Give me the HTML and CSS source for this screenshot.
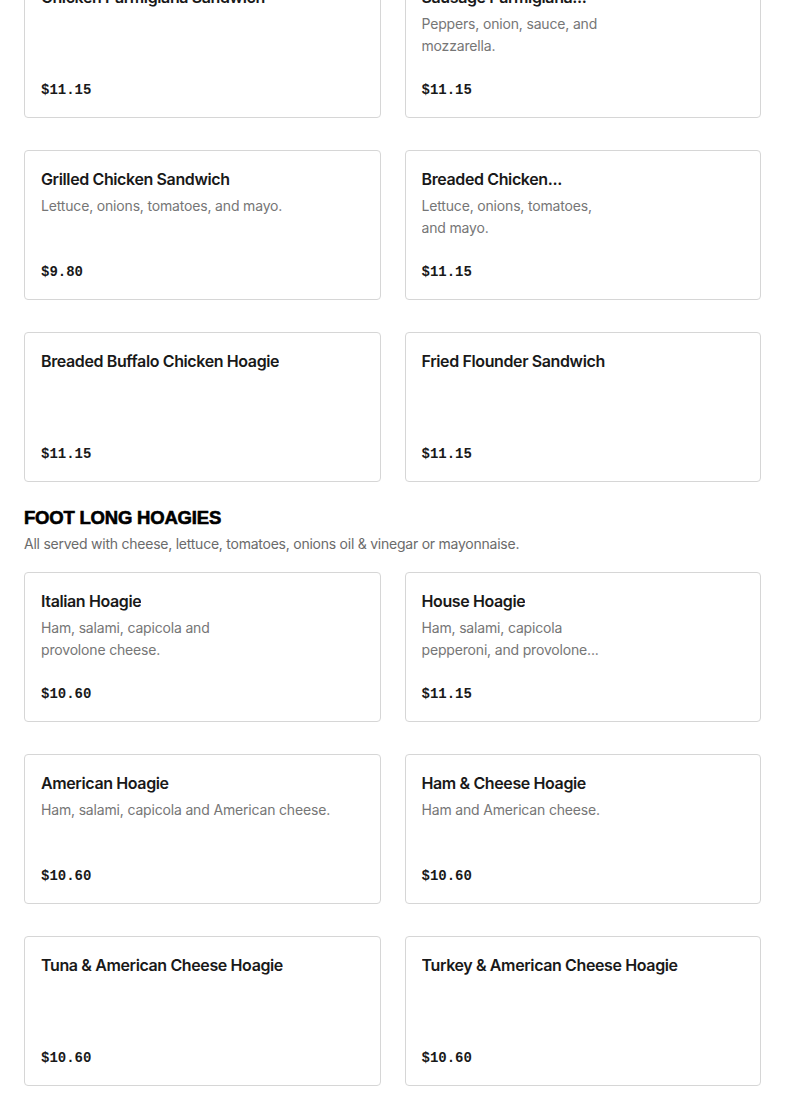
FILE: index.html
```html
<!DOCTYPE html>
<html lang="en">
<head>
<meta charset="utf-8">
<title>Menu</title>
<link rel="stylesheet" href="styles.css">
</head>
<body>
<main class="menu">
  <section class="section section-first">
    <div class="grid">
      <article class="card">
        <h3 class="item-title">Chicken Parmigiana Sandwich</h3>
        <p class="item-price">$11.15</p>
      </article>
      <article class="card has-media">
        <h3 class="item-title">Sausage Parmigiana...</h3>
        <p class="item-desc">Peppers, onion, sauce, and mozzarella.</p>
        <p class="item-price">$11.15</p>
      </article>
      <article class="card">
        <h3 class="item-title">Grilled Chicken Sandwich</h3>
        <p class="item-desc">Lettuce, onions, tomatoes, and mayo.</p>
        <p class="item-price">$9.80</p>
      </article>
      <article class="card has-media">
        <h3 class="item-title">Breaded Chicken...</h3>
        <p class="item-desc">Lettuce, onions, tomatoes, and mayo.</p>
        <p class="item-price">$11.15</p>
      </article>
      <article class="card">
        <h3 class="item-title">Breaded Buffalo Chicken Hoagie</h3>
        <p class="item-price">$11.15</p>
      </article>
      <article class="card">
        <h3 class="item-title">Fried Flounder Sandwich</h3>
        <p class="item-price">$11.15</p>
      </article>
    </div>
  </section>

  <section class="section">
    <h2 class="section-title">FOOT LONG HOAGIES</h2>
    <p class="section-sub">All served with cheese, lettuce, tomatoes, onions oil &amp; vinegar or mayonnaise.</p>
    <div class="grid">
      <article class="card has-media">
        <h3 class="item-title">Italian Hoagie</h3>
        <p class="item-desc">Ham, salami, capicola and provolone cheese.</p>
        <p class="item-price">$10.60</p>
      </article>
      <article class="card has-media">
        <h3 class="item-title">House Hoagie</h3>
        <p class="item-desc">Ham, salami, capicola<br>pepperoni, and provolone...</p>
        <p class="item-price">$11.15</p>
      </article>
      <article class="card">
        <h3 class="item-title">American Hoagie</h3>
        <p class="item-desc">Ham, salami, capicola and American cheese.</p>
        <p class="item-price">$10.60</p>
      </article>
      <article class="card">
        <h3 class="item-title">Ham &amp; Cheese Hoagie</h3>
        <p class="item-desc">Ham and American cheese.</p>
        <p class="item-price">$10.60</p>
      </article>
      <article class="card">
        <h3 class="item-title">Tuna &amp; American Cheese Hoagie</h3>
        <p class="item-price">$10.60</p>
      </article>
      <article class="card">
        <h3 class="item-title">Turkey &amp; American Cheese Hoagie</h3>
        <p class="item-price">$10.60</p>
      </article>
    </div>
  </section>
</main>
</body>
</html>
```

FILE: styles.css
```css
* { box-sizing: border-box; }

html, body {
  margin: 0;
  padding: 0;
  background: #ffffff;
}

body {
  font-family: Inter, "Liberation Sans", Arial, sans-serif;
  color: #191919;
  overflow: hidden;
}

.menu {
  padding: 0 24px;
  margin-top: -32px;
}

.section + .section {
  margin-top: 24px;
}

.section-title {
  margin: 0;
  font-family: "Liberation Sans", Arial, sans-serif;
  font-weight: 900;
  font-size: 18.5px;
  line-height: 24px;
  letter-spacing: -0.2px;
  color: #000000;
  -webkit-text-stroke: 0.6px #000;
}

.section-sub {
  margin: 4px 0 18px;
  font-size: 14px;
  line-height: 20px;
  letter-spacing: -0.24px;
  color: #6b6b6b;
}

.grid {
  display: grid;
  grid-template-columns: 1fr 1fr;
  column-gap: 24px;
  row-gap: 32px;
}

.card {
  height: 150px;
  border: 1px solid #d6d6d6;
  border-radius: 4px;
  padding: 16px 16px 15px;
  display: flex;
  flex-direction: column;
  align-items: flex-start;
}

.item-title {
  margin: 0;
  font-size: 16px;
  font-weight: 600;
  line-height: 24px;
  letter-spacing: -0.38px;
  color: #191919;
  white-space: nowrap;
  overflow: hidden;
  text-overflow: ellipsis;
  max-width: 100%;
}

.item-desc {
  margin: 4px 0 0;
  font-size: 14px;
  line-height: 22px;
  letter-spacing: -0.17px;
  color: #767676;
  display: -webkit-box;
  -webkit-line-clamp: 2;
  -webkit-box-orient: vertical;
  overflow: hidden;
}

.has-media .item-title,
.has-media .item-desc {
  max-width: 190px;
}

.item-price {
  margin: auto 0 0;
  font-family: "Liberation Mono", "DejaVu Sans Mono", monospace;
  font-weight: 700;
  font-size: 14px;
  line-height: 24px;
  color: #191919;
}
```
